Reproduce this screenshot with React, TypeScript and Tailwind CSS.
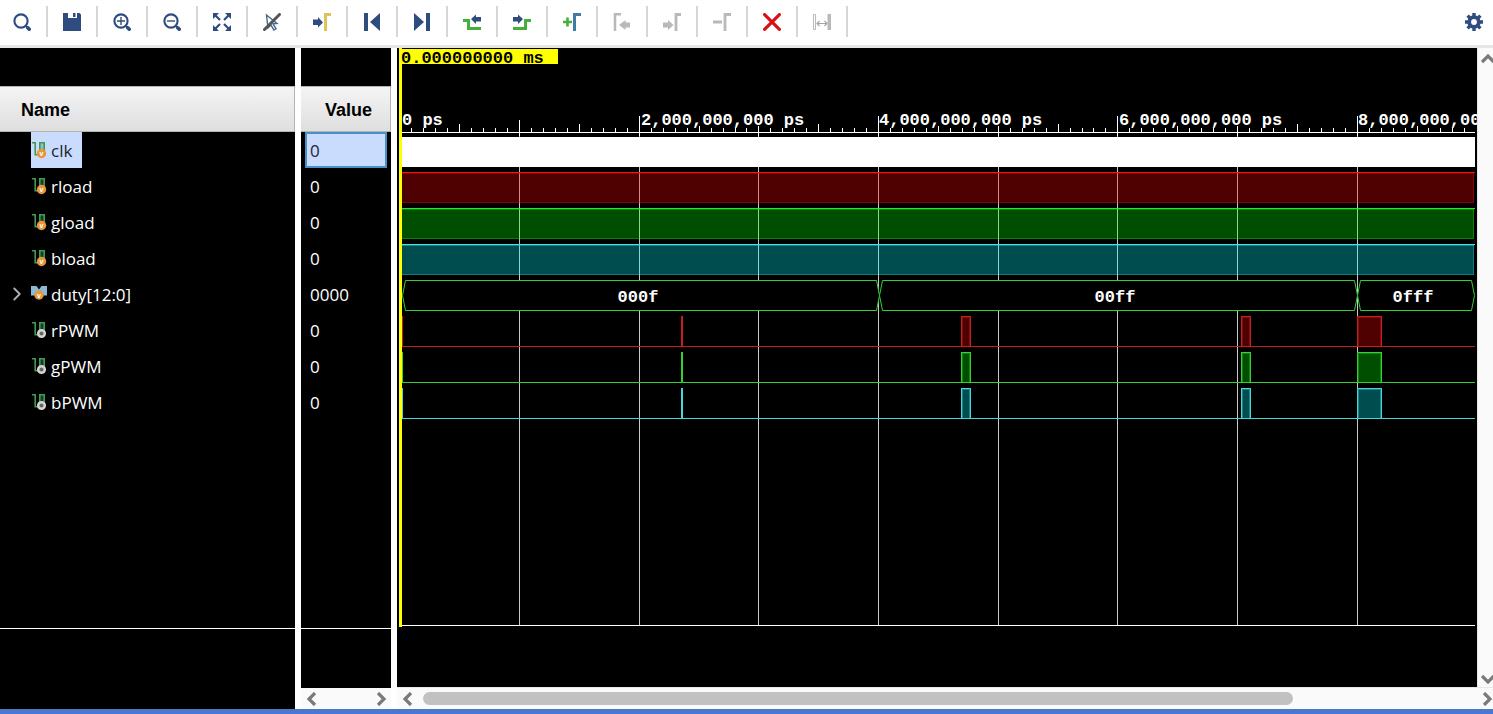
import type { ReactNode } from "react";
import { ChevronRight } from "lucide-react";

const NAVY = "#2f4c80";
const GREY = "#b9b9b9";
const GREEN = "#45b039";

type Tool = { label: string; icon: ReactNode; disabled?: boolean };

const lens = (
  <>
    <circle cx="8" cy="8" r="6.600" fill="none" stroke={NAVY} strokeWidth="2.100" />
    <path d="M12.500 12.500l2 2" stroke={NAVY} strokeWidth="2.200" />
    <path d="M14.800 14.800l1.400 1.400" stroke={NAVY} strokeWidth="3.600" strokeLinecap="round" />
  </>
);

const tools: Tool[] = [
  { label: "Search", icon: lens },
  {
    label: "Save",
    icon: <path fill={NAVY} fillRule="evenodd" d="M0 0h5v5h9V0h2.5L18 1.5V18H0zM10 0h2.5v4H10z" />,
  },
  {
    label: "Zoom in",
    icon: (
      <>
        {lens}
        <path d="M4 8h8M8 4v8" stroke={NAVY} strokeWidth="1.400" />
      </>
    ),
  },
  {
    label: "Zoom out",
    icon: (
      <>
        {lens}
        <path d="M4 8h8" stroke={NAVY} strokeWidth="1.400" />
      </>
    ),
  },
  {
    label: "Zoom to fit",
    icon: (
      <>
        <path fill={NAVY} d="M0 0h6L0 6zM18 0v6l-6-6zM0 18v-6l6 6zM18 18h-6l6-6z" />
        <path stroke={NAVY} strokeWidth="2.200" d="M2 2l5 5M16 2l-5 5M2 16l5-5M16 16l-5-5" />
      </>
    ),
  },
  {
    label: "Select area",
    icon: (
      <>
        <path
          d="M3.500 2l10.500 8.500-4 .3 3 5-2.200 1.200-2.800-5-3 3z"
          fill="none"
          stroke="#4a668f"
          strokeWidth="1.400"
        />
        <path d="M1.500 16.500L16.500 1.500" stroke="#555" strokeWidth="3" strokeLinecap="round" />
      </>
    ),
  },
  {
    label: "Go to cursor",
    icon: (
      <>
        <path fill={NAVY} d="M0 6.500h5V4l5 5.500-5 5V12H0z" />
        <path fill="none" stroke="#dcc35a" strokeWidth="3" d="M12.500 18V1.500H18" />
      </>
    ),
  },
  { label: "Go to time 0", icon: <path fill={NAVY} d="M1 0h4v18H1zM17 0v18L7 9z" /> },
  { label: "Go to last time", icon: <path fill={NAVY} d="M13 0h4v18h-4zM1 0v18L11 9z" /> },
  {
    label: "Previous transition",
    icon: (
      <>
        <path fill="none" stroke={GREEN} strokeWidth="3" d="M0 7.500h5.500v8H18" />
        <path fill={NAVY} d="M18 4h-5V1.500L8 6l5 5V8.500h5z" />
      </>
    ),
  },
  {
    label: "Next transition",
    icon: (
      <>
        <path fill="none" stroke={GREEN} strokeWidth="3" d="M0 15.500h12.500v-8H18" />
        <path fill={NAVY} d="M0 4h5V1.500L10 6l-5 5V8.500H0z" />
      </>
    ),
  },
  {
    label: "Add marker",
    icon: (
      <>
        <path stroke={GREEN} strokeWidth="2.600" d="M0 9h9M4.500 4.500v9" />
        <path fill="none" stroke="#3f7ba6" strokeWidth="3" d="M11.500 18V1.500H18" />
      </>
    ),
  },
  {
    label: "Previous marker",
    disabled: true,
    icon: (
      <>
        <path fill="none" stroke={GREY} strokeWidth="2.500" d="M2 18V1.300h6" />
        <path fill={GREY} d="M17 9.500h-4.500V7L6 12l6.500 5v-2.500H17z" />
      </>
    ),
  },
  {
    label: "Next marker",
    disabled: true,
    icon: (
      <>
        <path fill="none" stroke={GREY} strokeWidth="2.800" d="M13 18V1.500h5" />
        <path fill={GREY} d="M0 9.500h5V7l5.500 5L5 17v-2.500H0z" />
      </>
    ),
  },
  {
    label: "Remove marker",
    disabled: true,
    icon: <path fill="none" stroke={GREY} strokeWidth="2.800" d="M0 9h9M12 18V1.500h6" />,
  },
  {
    label: "Delete all markers",
    icon: <path stroke="#dc0f14" strokeWidth="3.200" strokeLinecap="round" d="M1.600 1.600l14.800 14.800M16.400 1.600l-14.800 14.800" />,
  },
  {
    label: "Swap cursors",
    disabled: true,
    icon: (
      <>
        <path fill="none" stroke={GREY} d="M.5 1.500h2v15h-2z" />
        <path fill={GREY} d="M14.500 1H18v16h-3.500z" />
        <path fill="none" stroke="#a5a5a5" strokeWidth="1.200" d="M4 10.500h10M6.500 8L4 10.500 6.500 13M11.500 8l2.500 2.500-2.500 2.500" />
      </>
    ),
  },
];

type Kind = "input" | "bus" | "output";
type Signal = { name: string; value: string; kind: Kind; selected?: boolean };

const signals: Signal[] = [
  { name: "clk", value: "0", kind: "input", selected: true },
  { name: "rload", value: "0", kind: "input" },
  { name: "gload", value: "0", kind: "input" },
  { name: "bload", value: "0", kind: "input" },
  { name: "duty[12:0]", value: "0000", kind: "bus" },
  { name: "rPWM", value: "0", kind: "output" },
  { name: "gPWM", value: "0", kind: "output" },
  { name: "bPWM", value: "0", kind: "output" },
];

function SignalIcon({ kind }: { kind: Kind }) {
  return (
    <svg width="16" height="18" viewBox="0 0 16 18" className="shrink-0" aria-hidden="true">
      {kind === "bus" ? (
        <path fill="#8db9d6" d="M0 1h5.500l2.500 3.500L10.500 1H16v9.500h-5L8 7l-3 3.500H0z" />
      ) : (
        <>
          <path fill="none" stroke="#3f9a55" strokeWidth="1.600" d="M1 1.800h3.200v12h4.600v-12h4.400V11" />
          <path fill="#3f9a55" opacity="0.400" d="M9 2h4v8H9z" />
        </>
      )}
      {kind === "output" ? (
        <circle cx="10.500" cy="12.500" r="3.300" fill="#666" stroke="#d4d4d4" strokeWidth="2.500" />
      ) : (
        <>
          <circle cx={kind === "bus" ? 8 : 10.5} cy={kind === "bus" ? 10 : 12.5} r="4.700" fill="#e8973a" />
          <text
            x={kind === "bus" ? 8 : 10.5}
            y={kind === "bus" ? 12.5 : 15}
            textAnchor="middle"
            className="fill-white font-['Liberation_Sans'] text-[7px] font-bold"
          >
            v
          </text>
        </>
      )}
    </svg>
  );
}

const headCell =
  "h-[46px] border border-l-0 border-[#b4b4b4] bg-linear-to-b from-[#f4f4f4] to-[#dedede] px-0 pt-0.5 pb-0 font-['Liberation_Sans',sans-serif] text-[18px] font-bold text-black";

function NamePanel() {
  return (
    <section className="flex w-[295px] shrink-0 flex-col bg-black pt-[38px]" aria-label="Signal names">
      <table className="w-full border-separate border-spacing-0">
        <thead>
          <tr>
            <th className={`${headCell} text-left`}>
              <span className="pl-[21px]">Name</span>
            </th>
          </tr>
        </thead>
        <tbody>
          {signals.map((s) => (
            <tr key={s.name}>
              <td className="h-9 p-0">
                <div className="flex h-9 items-center">
                  <span className="flex w-[31px] justify-center pl-0.5">
                    {s.kind === "bus" && (
                      <button type="button" aria-label="Expand duty[12:0]" className="text-[#b0b0b0]">
                        <ChevronRight size={22} strokeWidth={2} />
                      </button>
                    )}
                  </span>
                  <span
                    className={
                      s.selected
                        ? "flex h-9 items-center gap-1 bg-[#cadcfd] pr-[10px] text-[#1c2433]"
                        : "flex h-9 items-center gap-1 text-white"
                    }
                  >
                    <SignalIcon kind={s.kind} />
                    <span className="pt-0.5">{s.name}</span>
                  </span>
                </div>
              </td>
            </tr>
          ))}
        </tbody>
      </table>
      <div className="min-h-[160px] flex-1" />
      <div className="h-[81px] border-t border-white" />
    </section>
  );
}

type Direction = "left" | "right" | "up" | "down";
const arrowPaths: Record<Direction, string> = {
  left: "M10 1L4 7l6 6",
  right: "M5 1l6 6-6 6",
  up: "M1 10l6-6 6 6",
  down: "M1 5l6 6 6-6",
};

function ScrollArrow({ direction }: { direction: Direction }) {
  return (
    <button type="button" aria-label={`Scroll ${direction}`} className="shrink-0">
      <svg width="14" height="14" viewBox="0 0 14 14" aria-hidden="true">
        <path d={arrowPaths[direction]} fill="none" stroke="#7a7a7a" strokeWidth="3.200" />
      </svg>
    </button>
  );
}

function ValuePanel() {
  return (
    <section className="flex w-[90px] shrink-0 flex-col bg-black pt-[38px]" aria-label="Signal values">
      <table className="w-full border-separate border-spacing-0">
        <thead>
          <tr>
            <th className={headCell}>
              <span className="pl-1.5">Value</span>
            </th>
          </tr>
        </thead>
        <tbody>
          {signals.map((s) => (
            <tr key={s.name}>
              <td className="h-9 px-1 py-0">
                <div
                  className={
                    s.selected
                      ? "flex h-9 items-center border-2 border-[#4a90c8] bg-[#cadcfd] pl-[3px] text-[#1c2433]"
                      : "flex h-9 items-center pl-[5px] text-white"
                  }
                >
                  <span className="pt-0.5">{s.value}</span>
                </div>
              </td>
            </tr>
          ))}
        </tbody>
      </table>
      <div className="min-h-[160px] flex-1" />
      <div className="h-[60px] border-t border-white" />
      <div className="flex h-[21px] items-center justify-between bg-[#fafafa] px-1">
        <ScrollArrow direction="left" />
        <ScrollArrow direction="right" />
      </div>
    </section>
  );
}

const X0 = 5;
const X1 = 1078;
const STEP = 119.65;
const ticks = Array.from({ length: 89 }, (_, i) => i + 1);
const gridLines = [1, 2, 3, 4, 5, 6, 7, 8].map((n) => Math.floor(3 + STEP * n));
const rulerLabels = [
  { x: 5, width: 44, text: "0 ps" },
  { x: 244, width: 176, text: "2,000,000,000 ps" },
  { x: 482, width: 176, text: "4,000,000,000 ps" },
  { x: 722, width: 176, text: "6,000,000,000 ps" },
  { x: 961, width: 176, text: "8,000,000,000 ps" },
];
const loads = [
  { top: 124, color: "#f01414", fill: "#ff0000" },
  { top: 160, color: "#28e628", fill: "#00ff00" },
  { top: 196, color: "#3ce6eb", fill: "#00f8ff" },
];
const pwms = [
  { top: 268, color: "#c81e1e", fill: "#ff0000" },
  { top: 304, color: "#32d232", fill: "#00ff00" },
  { top: 340, color: "#46d7dc", fill: "#00f8ff" },
];
const pulses = [
  { x: 564, width: 9 },
  { x: 844, width: 9 },
  { x: 960, width: 24 },
];
const busValues = [
  { from: 5, to: 482, text: "000f" },
  { from: 482, to: 960, text: "00ff" },
  { from: 960, to: 1077, text: "0fff" },
];
const mono = "font-['Liberation_Mono',monospace] text-[17px] font-bold";

function Waveform() {
  return (
    <svg width="1080" height="639" className="block shrink-0" role="img" aria-label="Waveform">
      <g shapeRendering="crispEdges">
        {gridLines.map((x) => (
          <path key={x} d={`M${x + 0.5} 88V577`} stroke="#c8c8c8" />
        ))}
        {ticks.map((i) => {
          const x = Math.floor(3 + (STEP * i) / 10);
          const top = i % 20 === 0 ? 68 : i % 10 === 0 ? 72 : i % 5 === 0 ? 76 : 80;
          return <path key={i} d={`M${x + 0.5} ${top}V${i % 10 === 0 ? 88 : 85}`} stroke="#fff" />;
        })}
        {rulerLabels.map((l) => (
          <rect key={l.text} x={l.x} y="64" width={l.width} height="14" fill="#000" />
        ))}
        <path d={`M${X0} 84.500H${X1}M${X0} 577.500H${X1}`} stroke="#fff" />
        <rect x={X0} y="89" width={X1 - X0} height="30" fill="#fff" />
        {loads.map((l) => (
          <g key={l.top}>
            <rect x={X0} y={l.top} width={X1 - 1 - X0} height="31" fill={l.fill} opacity="0.310" />
            <path d={`M${X0} ${l.top + 30.5}H${X1 - 1.5}V${l.top}`} fill="none" stroke={l.color} opacity="0.300" />
            <path d={`M${X0} ${l.top + 0.5}H${X1}`} stroke={l.color} />
            <path d={`M${X0} ${l.top + 1.5}H${X1 - 1}`} stroke={l.color} opacity="0.350" />
          </g>
        ))}
      </g>
      {busValues.map((b) => (
        <path
          key={b.text}
          d={`M${b.from + 0.5} 247.500L${b.from + 3.5} 232.500H${b.to - 2.5}L${b.to + 0.5} 247.500L${b.to - 2.5} 262.500H${b.from + 3.5}Z`}
          fill="#000"
          stroke="#32d232"
        />
      ))}
      <g shapeRendering="crispEdges">
        {pwms.map((p) => (
          <g key={p.top}>
            <path d={`M5.500 ${p.top}V${p.top + 30.5}H${X1}`} fill="none" stroke={p.color} />
            <rect x="284" y={p.top} width="2" height="31" fill={p.color} />
            {pulses.map((q) => (
              <g key={q.x}>
                <rect x={q.x + 1} y={p.top + 1} width={q.width - 1} height="29" fill="#000" />
                <rect
                  x={q.x + 0.5}
                  y={p.top + 0.5}
                  width={q.width}
                  height="30"
                  fill={p.fill}
                  fillOpacity="0.310"
                  stroke={p.color}
                />
                <path
                  d={`M${q.x + 1.5} ${p.top + 30}V${p.top + 1.5}H${q.x + q.width - 0.5}V${p.top + 30}`}
                  fill="none"
                  stroke={p.color}
                  opacity="0.400"
                />
              </g>
            ))}
          </g>
        ))}
        <rect x="2" y="0" width="3" height="579" fill="#ffff00" />
        <rect x="2" y="1" width="159" height="15" fill="#ffff00" />
      </g>
      <g className={mono}>
        <text x="4" y="15">0.000000000 ms</text>
        {rulerLabels.map((l) => (
          <text key={l.text} x={l.x} y="77" fill="#fff">
            {l.text}
          </text>
        ))}
        {busValues.map((b) => (
          <text key={b.text} x={Math.round((b.from + b.to) / 2) - 3} y="254" fill="#fff" textAnchor="middle">
            {b.text}
          </text>
        ))}
      </g>
    </svg>
  );
}

function WavePanel() {
  return (
    <section className="flex min-w-0 flex-1 flex-col bg-[#fafafa]" aria-label="Waves">
      <div className="flex flex-1">
        <div className="min-w-0 flex-1 overflow-hidden bg-black">
          <Waveform />
        </div>
        <div className="flex w-4 shrink-0 flex-col items-start justify-between overflow-hidden border-l border-[#e8e8e8] pt-1 pb-0.5 pl-[3px]">
          <ScrollArrow direction="up" />
          <ScrollArrow direction="down" />
        </div>
      </div>
      <div className="flex h-[22px] items-center gap-2 border-t border-[#e8e8e8] pl-1">
        <ScrollArrow direction="left" />
        <div className="min-w-0 flex-1">
          <div className="h-[13px] w-[83%] rounded-full bg-[#c1c1c1]" />
        </div>
        <ScrollArrow direction="right" />
      </div>
    </section>
  );
}

function Gear() {
  return (
    <svg width="18" height="18" viewBox="0 0 18 18" aria-hidden="true">
      <circle cx="9" cy="9" r="4.800" fill="none" stroke={NAVY} strokeWidth="3.800" />
      <path
        stroke={NAVY}
        strokeWidth="3.400"
        d="M9 0v4M9 14v4M0 9h4M14 9h4M2.600 2.600l2.500 2.500M12.900 12.900l2.500 2.500M2.600 15.400l2.500-2.500M12.900 5.100l2.500-2.500"
      />
    </svg>
  );
}

export default function App() {
  return (
    <main className="flex min-h-screen flex-col bg-white font-['Open_Sans','Noto_Sans',sans-serif] text-[17px] leading-6">
      <div
        role="toolbar"
        aria-label="Waveform tools"
        className="flex h-12 shrink-0 items-start justify-between border-b-3 border-[#e6e6e6] pr-[10px]"
      >
        <div className="-ml-0.5 flex">
          {tools.map((t) => (
            <div key={t.label} className="flex w-[50px] items-start">
              <button
                type="button"
                aria-label={t.label}
                disabled={t.disabled}
                className="flex h-11 flex-1 items-center justify-center"
              >
                <svg width="18" height="18" viewBox="0 0 18 18" aria-hidden="true">
                  {t.icon}
                </svg>
              </button>
              <span className="mt-1.5 h-[31px] w-0.5 bg-[#d6d6d6]" />
            </div>
          ))}
        </div>
        <button type="button" aria-label="Settings" className="flex h-11 items-center">
          <Gear />
        </button>
      </div>
      <div className="flex flex-1 gap-1.5">
        <NamePanel />
        <ValuePanel />
        <WavePanel />
      </div>
      <div className="h-[5px] shrink-0 bg-[#4a78cd]" />
    </main>
  );
}
